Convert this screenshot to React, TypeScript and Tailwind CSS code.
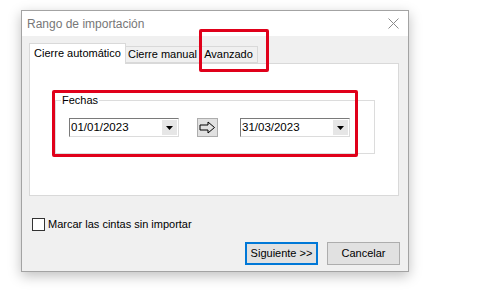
import React from "react";

const font = { fontFamily: '"Liberation Sans", Arial, sans-serif' };

function Combo({ value }: { value: string }) {
  return (
    <div className="flex h-[19px] w-[110px] items-center border-t border-l border-t-[#7a7a7a] border-l-[#7a7a7a] border-b border-r border-b-[#dcdcdc] border-r-[#dcdcdc] bg-white">
      <span className="flex-1 whitespace-nowrap pl-[1px] text-[11.5px] leading-none text-black">{value}</span>
      <div className="mr-[1px] flex h-[15px] w-[15px] items-center justify-center bg-[#e6e6e6]">
        <svg width="7" height="4" viewBox="0 0 7 4">
          <polygon points="0,0 7,0 3.5,4" fill="#000" />
        </svg>
      </div>
    </div>
  );
}

function ArrowButton() {
  return (
    <div className="flex h-[19px] w-[21px] items-center justify-center border border-[#adadad] bg-[#e1e1e1]">
      <svg width="17" height="13" viewBox="0 0 17 13">
        <polygon
          points="1,4 9,4 9,1 15.5,6.5 9,12 9,9 1,9"
          fill="none"
          stroke="#000"
          strokeWidth="1"
        />
      </svg>
    </div>
  );
}

export default function App() {
  return (
    <div className="relative h-[297px] w-[480px] overflow-hidden bg-white" style={font}>
      <div className="ml-[21px] mt-[10px] flex h-[262px] w-[388px] flex-col border border-[#a3a3a3] shadow-[0_4px_12px_rgba(0,0,0,0.25)]">
        {/* title bar */}
        <div className="flex h-[25px] items-center justify-between bg-white pl-[5px] pr-[9px]">
          <span className="whitespace-nowrap text-[12px] text-[#777]">Rango de importación</span>
          <svg width="11" height="11" viewBox="0 0 11 11">
            <path d="M0.5 0.5 L10.5 10.5 M10.5 0.5 L0.5 10.5" stroke="#8a8a8a" strokeWidth="1" />
          </svg>
        </div>

        {/* body */}
        <div className="flex flex-1 flex-col bg-[#f0f0f0] px-[7px] pt-[7px]">
          {/* tabs */}
          <div className="flex h-[20px] items-end">
            <div className="relative z-10 -mb-px flex h-[21px] w-[97px] items-center justify-center whitespace-nowrap border border-b-0 border-[#d9d9d9] bg-white pb-[2px] text-[11px] text-black">
              Cierre automático
            </div>
            <div className="flex h-[17px] w-[74px] items-center justify-center whitespace-nowrap border border-l-0 border-[#d9d9d9] bg-[#f0f0f0] text-[11px] text-black">
              Cierre manual
            </div>
            <div className="flex h-[17px] w-[58px] items-center justify-center whitespace-nowrap border border-l-0 border-[#d9d9d9] bg-[#f0f0f0] text-[11px] text-black">
              Avanzado
            </div>
          </div>

          {/* panel */}
          <div className="h-[133px] w-[370px] border border-[#d9d9d9] bg-white pl-[25px] pt-[36px]">
            <div className="relative h-[54px] w-[320px] border border-[#dcdcdc] pl-[13px] pt-[17px]">
              <span className="absolute left-[5px] top-[-8px] whitespace-nowrap bg-white px-[1px] text-[11px] leading-[14px] text-black">
                Fechas
              </span>
              <div className="flex items-center">
                <Combo value="01/01/2023" />
                <div className="ml-[18px]">
                  <ArrowButton />
                </div>
                <div className="ml-[22px]">
                  <Combo value="31/03/2023" />
                </div>
              </div>
            </div>
          </div>

          {/* checkbox */}
          <div className="ml-[3px] mt-[20px] flex items-center gap-[3px]">
            <div className="h-[13px] w-[13px] border border-[#333] bg-white" />
            <span className="whitespace-nowrap text-[11px] text-black">Marcar las cintas sin importar</span>
          </div>

          {/* buttons */}
          <div className="mt-[9px] flex justify-end gap-[9px] pr-[1px]">
            <div className="flex h-[23px] w-[73px] items-center justify-center whitespace-nowrap border-2 border-[#0078d7] bg-[#e1e1e1] text-[11px] text-black">
              Siguiente &gt;&gt;
            </div>
            <div className="flex h-[23px] w-[73px] items-center justify-center whitespace-nowrap border border-[#adadad] bg-[#e1e1e1] text-[11px] text-black">
              Cancelar
            </div>
          </div>
        </div>
      </div>

      {/* red highlight boxes */}
      <div className="absolute left-[199px] top-[29px] h-[43px] w-[70px] rounded-[2px] border-[3px] border-[#e0001a]" />
      <div className="absolute left-[52px] top-[90px] h-[67px] w-[306px] rounded-[2px] border-[3px] border-[#e0001a]" />
    </div>
  );
}
